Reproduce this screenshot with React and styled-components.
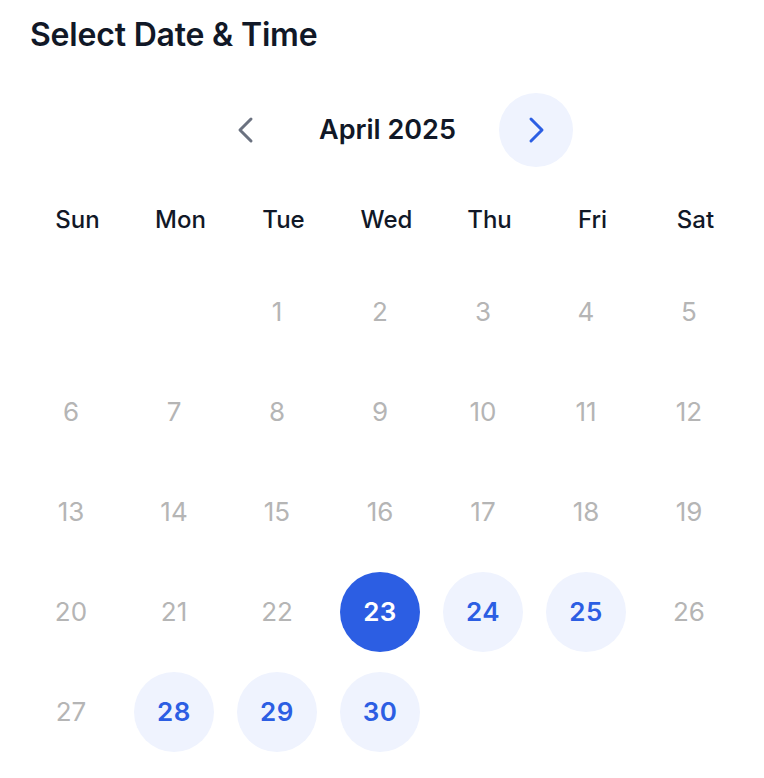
import React from "react";
import styled, { createGlobalStyle } from "styled-components";

const GlobalStyle = createGlobalStyle`
  html, body { margin: 0; padding: 0; background: #ffffff; }
  body { font-family: Inter, "Noto Sans", "Liberation Sans", sans-serif; }
  * { box-sizing: border-box; }
`;

const Page = styled.div`
  width: 764px;
  padding: 16px 0 0 0;
`;

const Title = styled.h1`
  margin: 0;
  padding-left: 30px;
  font-size: 32px;
  line-height: 38px;
  font-weight: 600;
  color: #111827;
  letter-spacing: -0.2px;
`;

const Nav = styled.div`
  display: flex;
  align-items: center;
  justify-content: center;
  margin-top: 39px;
  padding-left: 18px;
`;

const NavButton = styled.button`
  width: 74px;
  height: 74px;
  border-radius: 50%;
  border: none;
  padding: 0;
  display: flex;
  align-items: center;
  justify-content: center;
  cursor: pointer;
  background: ${(p) => (p.$active ? "#eff3fe" : "transparent")};
  color: ${(p) => (p.$active ? "#2c5ee3" : "#6b7280")};
`;

const Month = styled.div`
  width: 216px;
  padding-right: 7px;
  text-align: center;
  font-size: 27px;
  line-height: 32px;
  font-weight: 600;
  color: #111827;
`;

const Grid = styled.div`
  display: grid;
  grid-template-columns: repeat(7, 103px);
`;

const WeekRow = styled(Grid)`
  margin-top: 39px;
  padding-left: 26px;
`;

const WeekDay = styled.div`
  text-align: center;
  font-size: 24px;
  line-height: 28px;
  font-weight: 500;
  color: #111827;
`;

const DaysGrid = styled(Grid)`
  margin-top: 28px;
  padding-left: 19.5px;
  grid-auto-rows: 100px;
`;

const Cell = styled.div`
  display: flex;
  align-items: center;
  justify-content: center;
`;

const Day = styled.div`
  width: 80px;
  height: 80px;
  border-radius: 50%;
  display: flex;
  align-items: center;
  justify-content: center;
  font-size: 26px;
  line-height: 1;
  font-weight: ${(p) => (p.$variant === "muted" ? 400 : 600)};
  color: ${(p) =>
    p.$variant === "selected" ? "#ffffff" : p.$variant === "available" ? "#2c5ee3" : "#b5b5b5"};
  background: ${(p) =>
    p.$variant === "selected" ? "#2c5ee3" : p.$variant === "available" ? "#eff3fe" : "transparent"};
  letter-spacing: ${(p) => (p.$variant === "muted" ? "0" : "0.5px")};
`;

const Chevron = ({ dir }) => (
  <svg width="20" height="30" viewBox="0 0 20 30" fill="none">
    <polyline
      points={dir === "left" ? "15,4 4,15 15,26" : "5,4 16,15 5,26"}
      stroke="currentColor"
      strokeWidth="3"
      strokeLinecap="round"
      strokeLinejoin="round"
    />
  </svg>
);

const weekdays = ["Sun", "Mon", "Tue", "Wed", "Thu", "Fri", "Sat"];
const available = [24, 25, 28, 29, 30];
const selected = 23;

export default function App() {
  const cells = [null, null];
  for (let d = 1; d <= 30; d++) cells.push(d);

  return (
    <Page>
      <GlobalStyle />
      <Title>Select Date &amp; Time</Title>
      <Nav>
        <NavButton aria-label="Previous month">
          <Chevron dir="left" />
        </NavButton>
        <Month>April 2025</Month>
        <NavButton $active aria-label="Next month">
          <Chevron dir="right" />
        </NavButton>
      </Nav>
      <WeekRow>
        {weekdays.map((w) => (
          <WeekDay key={w}>{w}</WeekDay>
        ))}
      </WeekRow>
      <DaysGrid>
        {cells.map((d, i) => (
          <Cell key={i}>
            {d && (
              <Day
                $variant={
                  d === selected ? "selected" : available.includes(d) ? "available" : "muted"
                }
              >
                {d}
              </Day>
            )}
          </Cell>
        ))}
      </DaysGrid>
    </Page>
  );
}
